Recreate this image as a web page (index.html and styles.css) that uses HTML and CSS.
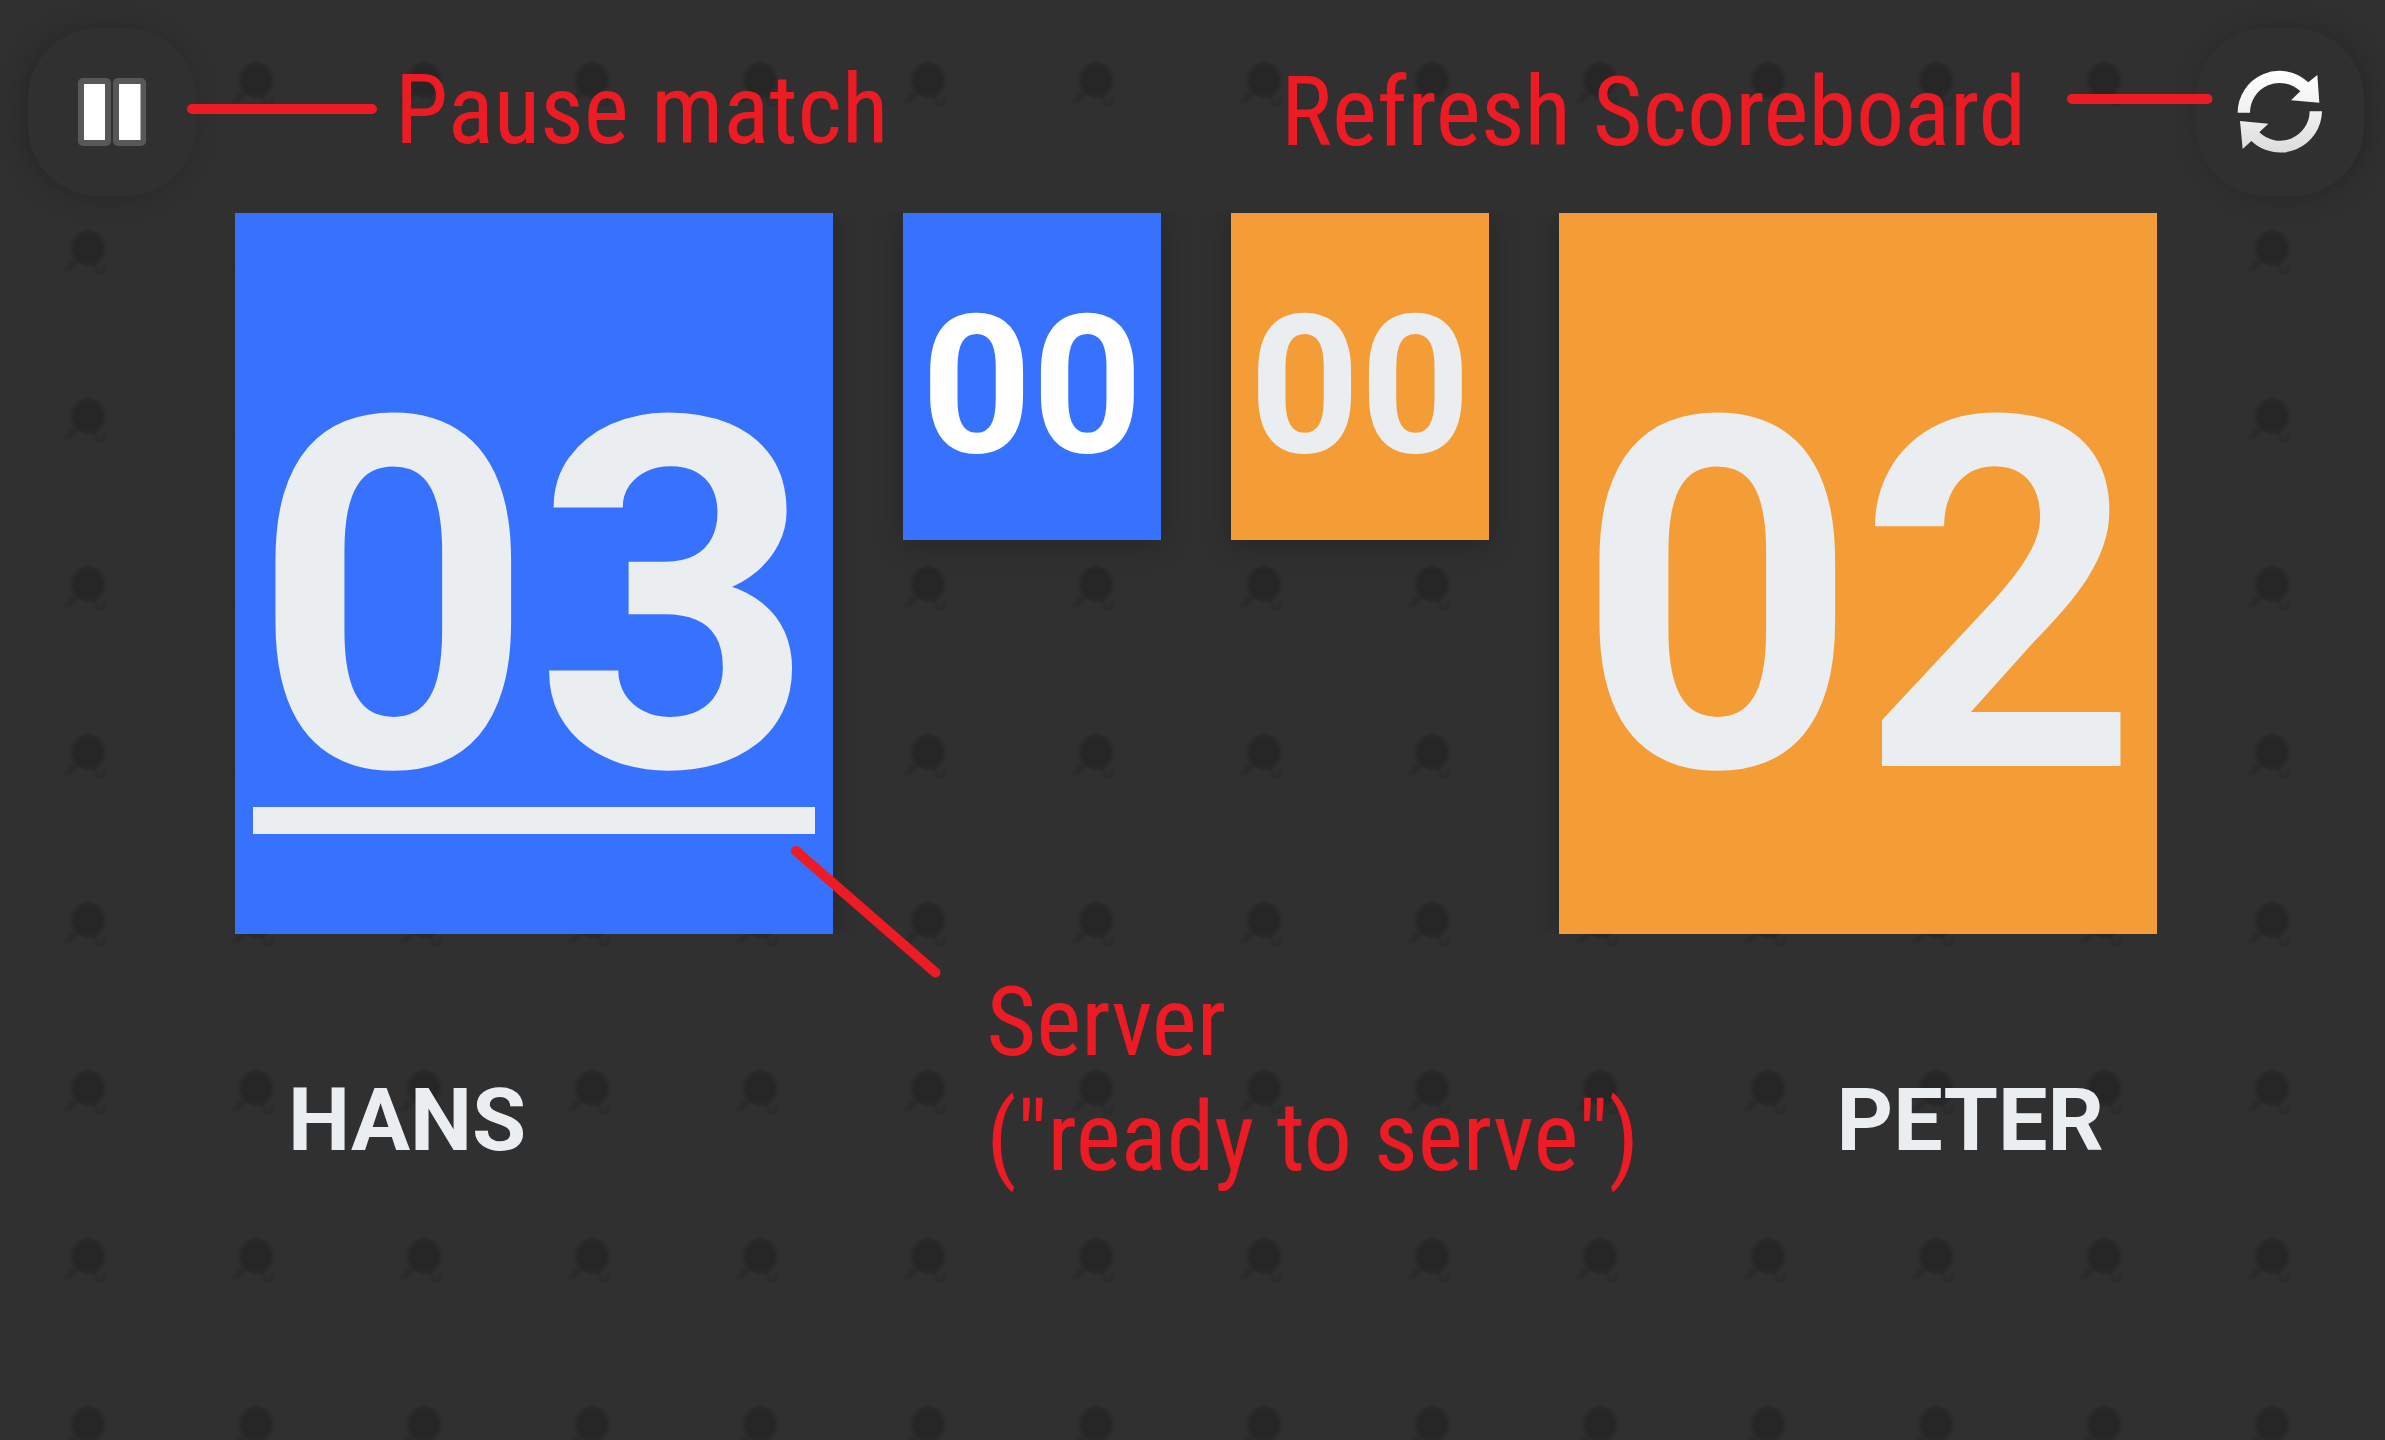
FILE: index.html
```html
<!DOCTYPE html>
<html lang="en">
<head>
<meta charset="utf-8">
<title>Scoreboard</title>
<link rel="stylesheet" href="styles.css">
</head>
<body>
<div class="screen">
  <svg class="backdrop" width="2385" height="1440" aria-hidden="true">
    <defs>
      <filter id="soft" x="-20%" y="-20%" width="140%" height="140%"><feGaussianBlur stdDeviation="1"/></filter>
      <pattern id="paddles" x="4" y="-4" width="168" height="168" patternUnits="userSpaceOnUse">
        <g filter="url(#soft)">
          <path d="M63 105L76 95" stroke="#2b2b2b" stroke-width="5" stroke-linecap="round"/>
          <path d="M80 99L92 100" stroke="#2d2d2d" stroke-width="3"/>
          <circle cx="95.500" cy="104" r="4.500" fill="none" stroke="#2c2c2c" stroke-width="2"/>
          <ellipse cx="84" cy="84" rx="16.500" ry="17" fill="#262626"/>
        </g>
      </pattern>
    </defs>
    <rect width="2385" height="1440" fill="url(#paddles)"/>
  </svg>

  <header class="toolbar">
    <button class="tool tool-pause" aria-label="Pause">
      <svg viewBox="28 28 168 168">
        <g fill="#585858"><rect x="78" y="78" width="33" height="68" rx="5"/><rect x="113" y="78" width="33" height="68" rx="5"/></g>
        <g fill="#fff"><rect x="84" y="84" width="21" height="56"/><rect x="119" y="84" width="21.500" height="56"/></g>
      </svg>
    </button>
    <button class="tool tool-refresh" aria-label="Refresh">
      <svg viewBox="588 84 504 504">
        <defs>
          <linearGradient id="metal" gradientUnits="userSpaceOnUse" x1="0" y1="212" x2="0" y2="461"><stop offset="0" stop-color="#fff"/><stop offset=".5" stop-color="#f0f0f0"/><stop offset="1" stop-color="#dcdcdc"/></linearGradient>
          <filter id="edge"><feGaussianBlur stdDeviation="2"/></filter>
        </defs>
        <g fill="url(#metal)" filter="url(#edge)">
          <path d="M713 338A125.500 125.500 0 0 1 925 247L952 225L958 308L873 301L901 274A89 89 0 0 0 750 338Z"/>
          <path d="M966 334A125.500 125.500 0 0 1 754 423L728 447L720 363L805 371L778 397A89 89 0 0 0 929 334Z"/>
        </g>
      </svg>
    </button>
  </header>

  <main class="board">
    <section class="points blue"><div class="digits">03</div><div class="serve-bar"></div></section>
    <section class="sets blue active"><div class="digits">00</div></section>
    <section class="sets orange"><div class="digits">00</div></section>
    <section class="points orange"><div class="digits">02</div></section>
  </main>

  <footer class="players"><div>HANS</div><div>PETER</div></footer>

  <svg class="pointers" width="2385" height="1440" aria-hidden="true">
    <path d="M192 109H372M2072 99H2207.500M796 851L935.500 972.500"/>
  </svg>
  <div class="note note-pause">Pause match</div>
  <div class="note note-refresh">Refresh Scoreboard</div>
  <div class="note note-server">Server<br>("ready to serve")</div>
</div>
</body>
</html>
```
FILE: styles.css
```css
* { box-sizing: border-box; }
body { margin: 0; background: #303030; font-family: Roboto, sans-serif; }
.screen {
  position: relative;
  width: 2385px;
  height: 1440px;
  overflow: hidden;
  background: #303030;
  display: flex;
  flex-direction: column;
}
.backdrop, .pointers { position: absolute; left: 0; top: 0; }

.toolbar {
  position: relative;
  display: flex;
  justify-content: space-between;
  height: 213px;
  padding: 28px 21px 0 28px;
}
.tool {
  width: 168px;
  height: 168px;
  padding: 0;
  border: 0;
  border-radius: 70px;
  background: #303030;
}
.tool svg { display: block; width: 168px; height: 168px; }
.tool-pause { box-shadow: -5px 1px 28px rgba(0, 0, 0, .2); }
.tool-refresh { box-shadow: 5px 1px 28px rgba(0, 0, 0, .2); }

.board {
  position: relative;
  display: flex;
  gap: 70px;
  align-items: flex-start;
  width: 1922px;
  height: 721px;
  margin-left: 235px;
  overflow: hidden;
}
.blue { background: #3772ff; }
.orange { background: #f49d37; }
.digits { color: #ebeef1; font-weight: 700; text-align: center; white-space: nowrap; }
.points {
  width: 598px;
  height: 721px;
  padding: 205.5px 18px 0;
  box-shadow: 0 4px 22px rgba(0, 0, 0, .22);
}
.points .digits { font-size: 490.5px; line-height: 360px; margin: 0 -18px; }
.serve-bar { height: 27px; margin-top: 28.5px; background: #ebeef1; }
.sets {
  width: 258px;
  height: 327px;
  padding-top: 102px;
  box-shadow: 0 4px 28px rgba(0, 0, 0, .24);
}
.sets .digits { font-size: 193px; line-height: 142px; }
.active .digits { color: #fff; }

.players {
  position: relative;
  display: flex;
  justify-content: space-between;
  margin-top: 142px;
  padding: 0 281px 0 288px;
  color: #ebeef1;
  font-size: 88px;
  font-weight: 700;
  line-height: 88px;
}

.pointers { fill: none; stroke: #ed1c24; stroke-width: 10; stroke-linecap: round; }
.note {
  position: absolute;
  color: #ed1c24;
  font-family: "Roboto Condensed", Roboto, sans-serif;
  font-stretch: 75%;
  font-size: 96px;
  line-height: 115px;
  white-space: nowrap;
}
.note-pause { left: 395px; top: 53px; }
.note-refresh { left: 1281px; top: 55px; }
.note-server { left: 986.5px; top: 965px; }
```
